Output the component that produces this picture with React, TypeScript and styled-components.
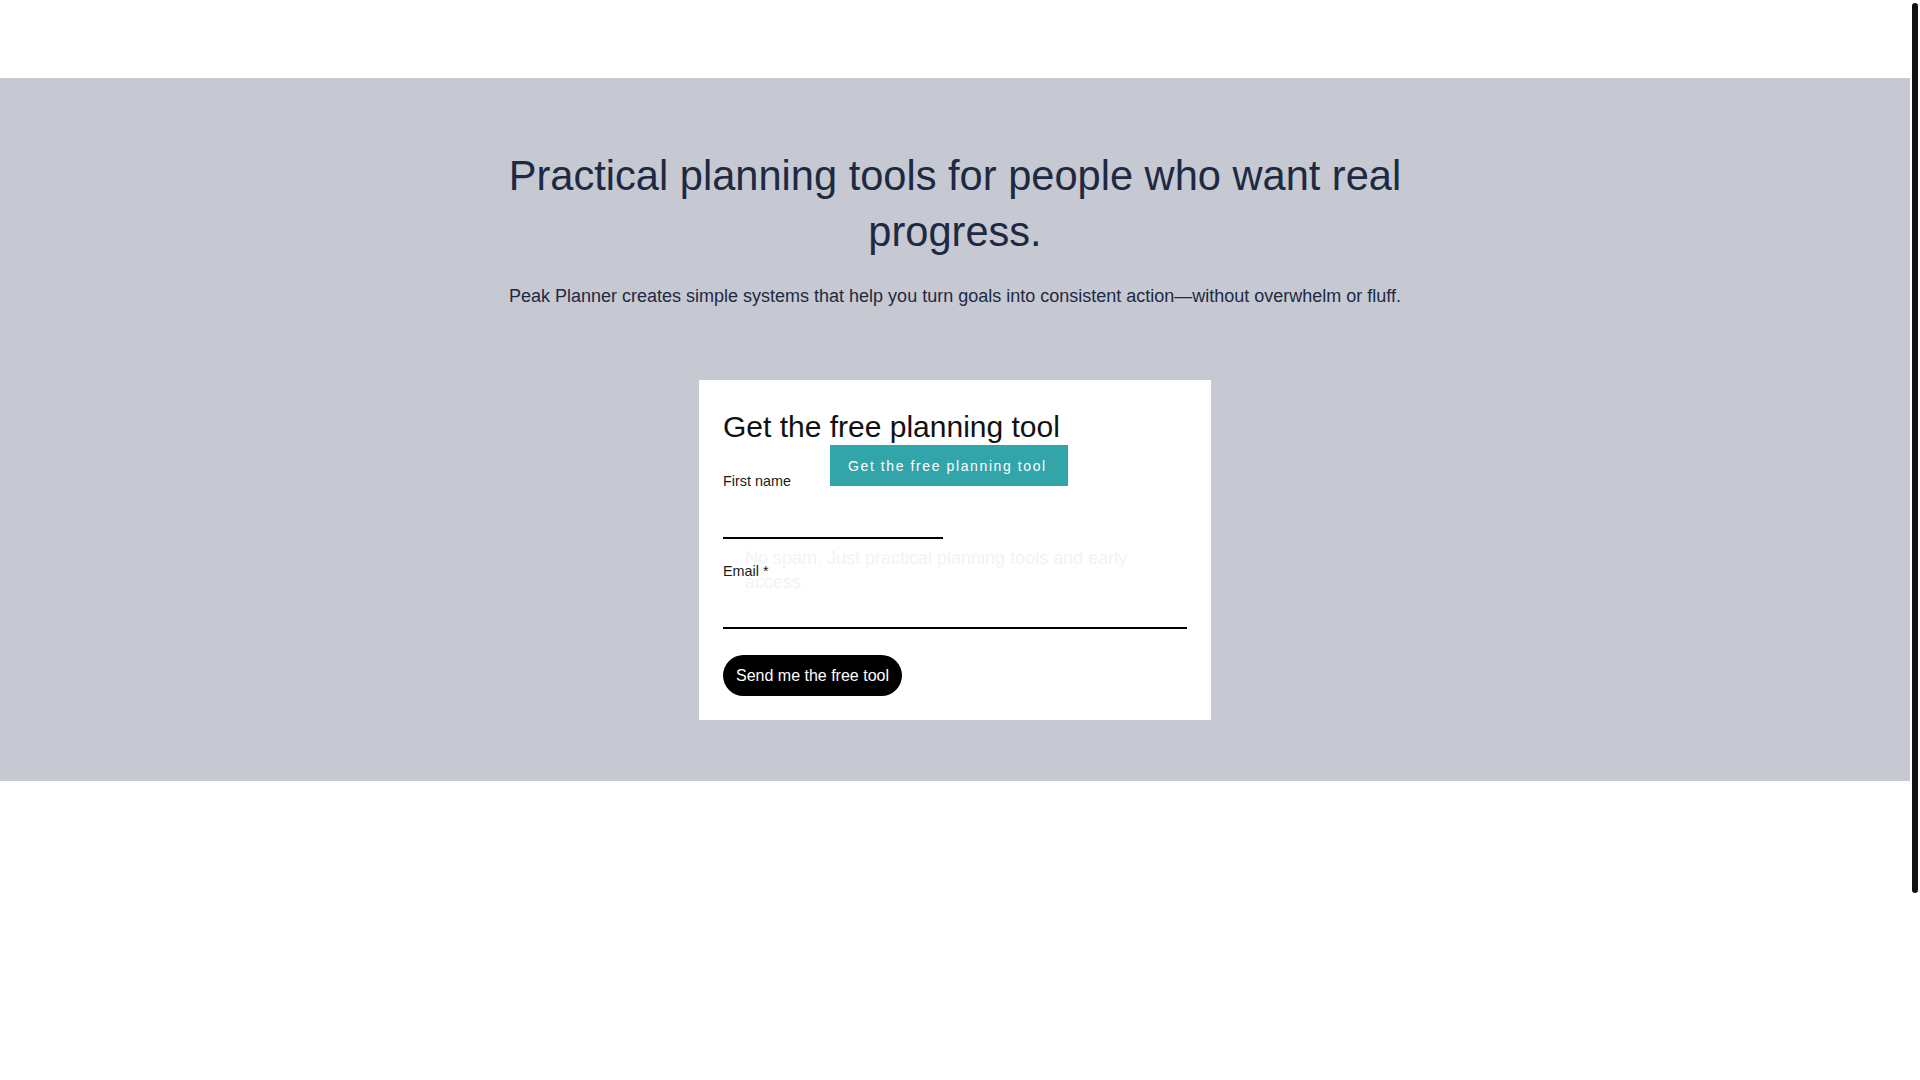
import styled, { createGlobalStyle } from 'styled-components'

const GlobalStyle = createGlobalStyle`
    html, body {
        margin: 0;
        padding: 0;
        background: #ffffff;
        font-family: "Liberation Sans", Arial, sans-serif;
    }
    * {
        box-sizing: border-box;
    }
`

const Layout = styled.div`
    display: flex;
    align-items: flex-start;
`
const Page = styled.div`
    flex: 1;
    display: flex;
    flex-direction: column;
    min-width: 0;
`
const ScrollRail = styled.aside`
    position: sticky;
    top: 0;
    width: 10px;
    height: 100vh;
    padding: 3px 1.7px;
    background: #ffffff;
`
const ScrollThumb = styled.div`
    height: 890px;
    border-radius: 4px;
    background: #111111;
`
const TopBar = styled.header`
    height: 78px;
    background: #ffffff;
`
const Hero = styled.section`
    display: flex;
    flex-direction: column;
    align-items: center;
    background: #c6c9d2;
    padding: 70px 24px 61px;
    text-align: center;
`
const Title = styled.h1`
    max-width: 960px;
    margin: 0 0 23px;
    font-size: 41.6px;
    line-height: 56px;
    font-weight: 400;
    color: #1e2942;
`
const Lead = styled.p`
    max-width: 960px;
    margin: 0 0 70px;
    font-size: 18px;
    line-height: 27px;
    color: #1e2942;
`
const FormCard = styled.form`
    position: relative;
    width: 512px;
    padding: 29px 24px 24px;
    background: #ffffff;
    text-align: left;
`
const CardTitle = styled.h2`
    margin: 0 0 26px;
    font-size: 30px;
    line-height: 36px;
    font-weight: 400;
    color: #111111;
`
const Fields = styled.div`
    display: grid;
    grid-template-columns: 1fr 1fr;
    column-gap: 24px;
    row-gap: 22px;
    margin-bottom: 26px;
`
const Field = styled.div<{ $wide?: boolean }>`
    display: flex;
    flex-direction: column;
    gap: 4px;
    grid-column: ${p => (p.$wide ? '1 / -1' : 'auto')};
`
const Label = styled.label`
    font-size: 14.4px;
    line-height: 20px;
    color: #1a1a1a;
`
const Input = styled.input`
    width: 100%;
    height: 44px;
    border: none;
    border-bottom: 2px solid #000000;
    background: transparent;
    font-family: inherit;
    font-size: 16px;
    outline: none;
`
const SubmitButton = styled.button`
    height: 41px;
    padding: 0 13px;
    border: none;
    border-radius: 21px;
    background: #000000;
    color: #ffffff;
    font-family: inherit;
    font-size: 16px;
    cursor: pointer;
`
const FloatingCta = styled.button`
    position: absolute;
    top: 65px;
    left: 131px;
    width: 238px;
    height: 41px;
    padding: 0 0 0 18px;
    border: none;
    background: #31a5aa;
    color: #ffffff;
    font-family: inherit;
    font-size: 14px;
    letter-spacing: 1.6px;
    text-align: left;
    cursor: pointer;
`
const Notice = styled.p`
    position: absolute;
    top: 166px;
    left: 46px;
    right: 24px;
    margin: 0;
    font-size: 18px;
    line-height: 24px;
    color: #f3f3f5;
`
const FooterSpace = styled.footer`
    height: 528px;
    background: #ffffff;
`

const App = () => {
    return (
        <>
            <GlobalStyle />
            <Layout>
                <Page>
                    <TopBar />
                    <Hero>
                        <Title>Practical planning tools for people who want real progress.</Title>
                        <Lead>
                            Peak Planner creates simple systems that help you turn goals into consistent action—without overwhelm or fluff.
                        </Lead>
                        <FormCard onSubmit={e => e.preventDefault()}>
                            <CardTitle>Get the free planning tool</CardTitle>
                            <Fields>
                                <Field>
                                    <Label htmlFor="first-name">First name</Label>
                                    <Input id="first-name" type="text" />
                                </Field>
                                <Field $wide>
                                    <Label htmlFor="email">Email *</Label>
                                    <Input id="email" type="email" required />
                                </Field>
                            </Fields>
                            <SubmitButton type="submit">Send me the free tool</SubmitButton>
                            <Notice>No spam. Just practical planning tools and early access.</Notice>
                            <FloatingCta type="button">Get the free planning tool</FloatingCta>
                        </FormCard>
                    </Hero>
                    <FooterSpace />
                </Page>
                <ScrollRail>
                    <ScrollThumb />
                </ScrollRail>
            </Layout>
        </>
    )
}

export default App
